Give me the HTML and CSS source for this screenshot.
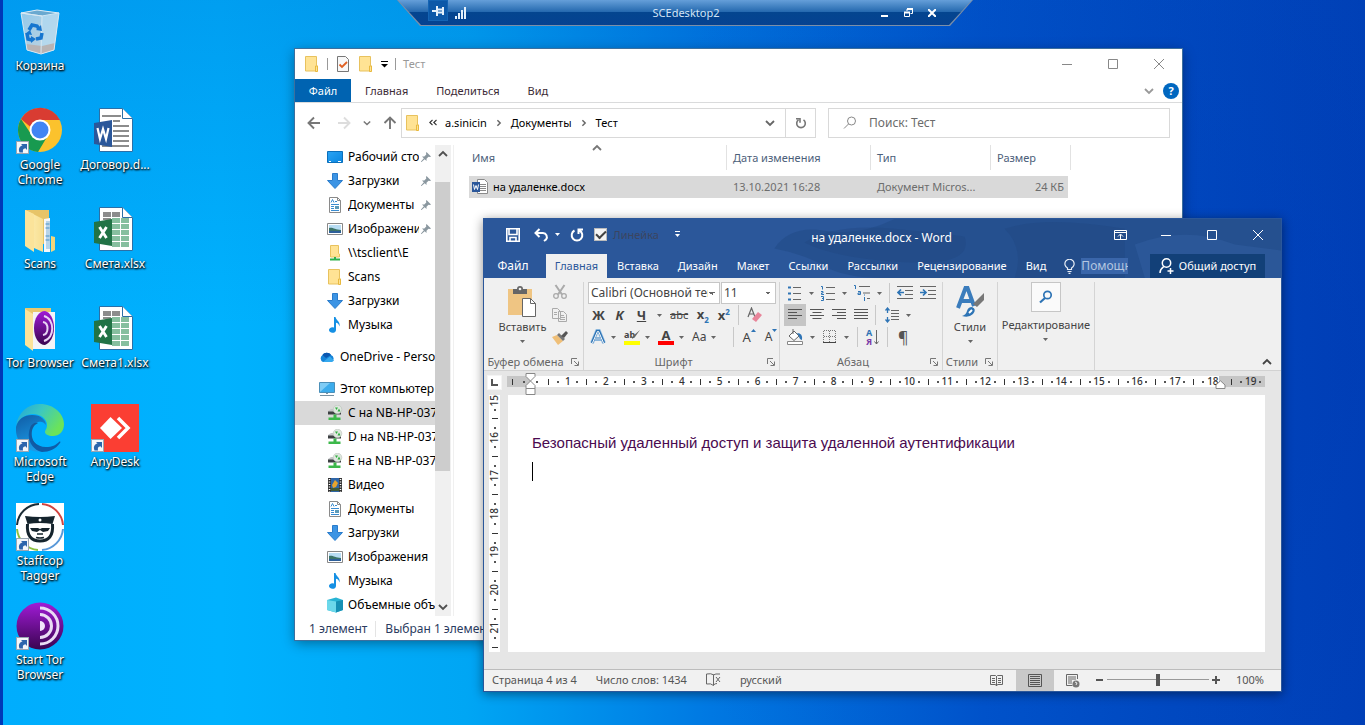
FILE: index.html
```html
<!DOCTYPE html>
<html lang="ru">
<head>
<meta charset="utf-8">
<title>SCEdesktop2</title>
<link rel="stylesheet" href="styles.css">
</head>
<body>
<svg class="defs" aria-hidden="true">
  <defs>
    <linearGradient id="gTor" x1="0" y1="0" x2="0" y2="1"><stop offset="0" stop-color="#a01bd6"/><stop offset="1" stop-color="#3a0450"/></linearGradient>
    <linearGradient id="gEdgeA" x1="0" y1="0" x2="1" y2="0.5"><stop offset="0" stop-color="#1fa4dc"/><stop offset="0.5" stop-color="#3cc8c0"/><stop offset="1" stop-color="#6be35a"/></linearGradient>
    <linearGradient id="gEdgeB" x1="0" y1="0" x2="0.4" y2="1"><stop offset="0" stop-color="#105ba4"/><stop offset="1" stop-color="#1b9be6"/></linearGradient>
    <linearGradient id="gFold" x1="0" y1="0" x2="1" y2="0"><stop offset="0" stop-color="#fff0b8"/><stop offset="1" stop-color="#f2d377"/></linearGradient>
    <linearGradient id="gBin" x1="0" y1="0" x2="1" y2="1"><stop offset="0" stop-color="#8fc9ec"/><stop offset="1" stop-color="#c8d4dc"/></linearGradient>
    <linearGradient id="gScr" x1="0" y1="0" x2="1" y2="1"><stop offset="0" stop-color="#2ba4f4"/><stop offset="1" stop-color="#0a86e0"/></linearGradient>

    <symbol id="shortcut" viewBox="0 0 13 13"><rect x=".5" y=".5" width="12" height="12" fill="#f4f7fa" stroke="#9aa6b2"/><path d="M3.500 11.500c-1.500-4 .2-6.500 3-7L5 3h6v6L9.500 7.200C7 7.500 6.500 9 7 11.500z" fill="#2c66ac"/></symbol>
    <symbol id="bin" viewBox="0 0 48 48"><path d="M5 5l16-3 22 3-5 37-13 4-14-4z" fill="url(#gBin)"/><path d="M5 5l16-3 22 3-17 3z" fill="#6aa9d0" stroke="#dcecf6"/><path d="M26 8l17-3-5 37-13 4z" fill="#b4dcf2" opacity=".65"/><path d="M10 36l16 2 13-3-1 7-13 4-14-4z" fill="#b9b4b4"/><path d="M5 5l21 3-1 37M5 5l6 37 14 4 13-4 5-37" fill="none" stroke="#d8e8f2"/><g fill="none" stroke="#1676cf" stroke-width="3.500"><path d="M13 22l3-5 5 1 2 3M11 25l1 6 4 1M20 31l5-1 1-5"/></g><path d="M20 22l6 1-1-6zM15 28l0 7 5-4zM9 26l5-4 2 5z" fill="#1676cf"/></symbol>
    <symbol id="chrome" viewBox="0 0 48 48"><circle cx="24" cy="23" r="22" fill="#fbc22d"/><path d="M5 12A22 22 0 0 1 44 13H24a10 10 0 0 0-9.500 7z" fill="#d93c32"/><path d="M5 12A22 22 0 0 0 22 45l9-15a10 10 0 0 1-16-3z" fill="#189a50"/><circle cx="24" cy="23" r="10.500" fill="#fff"/><circle cx="24" cy="23" r="8.500" fill="#4285f4"/></symbol>
    <symbol id="fileword" viewBox="0 0 48 48"><g transform="translate(-4 -1)"><path d="M12.500 2.500h23l10 10v33h-33z" fill="#fff" stroke="#2c6fa6"/><path d="M35.500 2.500v10h10" fill="#fff" stroke="#2c6fa6"/><path d="M15 10h19M26 15h7M26 20h16M26 25h16M26 30h16M26 35h16M15 40h27" stroke="#8c8c8c" stroke-width="2"/><path d="M7 17l18-3v27L7 38z" fill="#2b579a"/><path d="M10.500 22l2.500 11 3-10 3 10 2.500-11" fill="none" stroke="#fff" stroke-width="2.200"/></g></symbol>
    <symbol id="fileexcel" viewBox="0 0 48 48"><g transform="translate(-4 -1)"><path d="M12.500 2.500h23l10 10v33h-33z" fill="#fff" stroke="#2c6fa6"/><path d="M35.500 2.500v10h10" fill="#fff" stroke="#2c6fa6"/><path d="M16 7h8v5h-8zM25 7h8v5h-8zM16 13h8v2h-8zM25 13h8v2" fill="#8c8c8c"/><path d="M25 13h8v5h-8zM34 13h8v5h-8zM25 19h8v5h-8zM34 19h8v5h-8zM25 25h8v5h-8zM34 25h8v5h-8zM25 31h8v5h-8zM34 31h8v5h-8zM25 37h8v5h-8zM34 37h8v5h-8z" fill="#86bf9f"/><path d="M7 17l18-3v27L7 38z" fill="#217346"/><path d="M12.500 22l7 11M19.500 22l-7 11" fill="none" stroke="#fff" stroke-width="2.800"/></g></symbol>
    <symbol id="bigfolder" viewBox="0 0 48 48"><path d="M10 4h23v34H10z" fill="#e7c468"/><path d="M28 13l6-1v34h-6z" fill="#f4f8fb"/><path d="M30 15h4v28h-4z" fill="#b8d4e8"/><path d="M29.500 18h4M29.500 22h4M29.500 30h4M29.500 34h4" stroke="#4b93c8"/><path d="M9 4l18 9v33L9 38zM35 30l4 1v13l-4 2z" fill="url(#gFold)"/><path d="M9 4l9 4v38l-9-6z" fill="#fbe39a"/></symbol>
    <symbol id="torfolder" viewBox="0 0 48 48"><path d="M9 3h26v36H9z" fill="#e9c86e"/><path d="M17 7h22v37H17z" fill="#f3f3f7"/><path d="M29 6c-6 0-11 7-11 17s5 17 11 17c5-2 9-8 9-17S34 7 29 6z" fill="url(#gTor)"/><g fill="none" stroke="#e8d4f4" stroke-width="2"><path d="M27 17c6 1 6 12 0 13M28 11c11 3 11 22 0 25"/></g><path d="M9 4l8 5v37l-8-6z" fill="#fbe39a"/></symbol>
    <symbol id="tor" viewBox="0 0 48 48"><circle cx="24" cy="24" r="23.500" fill="url(#gTor)"/><path d="M24 19a5 5 0 0 1 0 10z" fill="#f2e6fa"/><g fill="none" stroke="#eadcf4" stroke-width="3"><path d="M24 12.500a11.500 11.500 0 0 1 0 23M24 6a18 18 0 0 1 0 36"/></g></symbol>
    <symbol id="edge" viewBox="0 0 48 48"><path d="M0 22C2 8 12 0 24 0c14 0 24 10 24 20 0 8-5 12-11 12-5 0-8-2-8-4s2-3 2-7c0-6-6-11-14-11C9 10 2 15 0 22z" fill="url(#gEdgeA)"/><path d="M0 23c2-8 8-12 16-12 9 0 14 5 14 10-2-3-5-4-8-3-5 2-8 8-6 15 1 6 5 11 11 14C12 50 0 39 0 26z" fill="url(#gEdgeB)"/><path d="M14 25c-1 10 6 18 16 18 6 0 10-2 13-5 1-1 2 0 1 1-4 6-11 9-18 9-10-2-16-14-12-23z" fill="#0f5ca8"/><path d="M19 21c-5 5-5 17 5 22-8-1-12-12-10-19 1-4 5-6 8-5z" fill="#155a9c"/></symbol>
    <symbol id="anydesk" viewBox="0 0 48 48"><path d="M0 0h48v48H0z" fill="#fb3e33"/><path d="M19.500 13L31 24 19.500 35 9 24z" fill="#fff"/><path d="M27 14l10 10-10 10" fill="none" stroke="#fff" stroke-width="3.500"/></symbol>
    <symbol id="staffcop" viewBox="0 0 48 48"><path d="M0 0h48v48H0z" fill="#fff"/><g fill="none" stroke-width="2"><path d="M1 22A23 23 0 0 1 23 1" stroke="#1c2c36"/><path d="M26 1a23 23 0 0 1 21 21" stroke="#d04440"/><path d="M47 26a23 23 0 0 1-21 21" stroke="#5898d8"/><path d="M22 47A23 23 0 0 1 1 26" stroke="#8cc040"/></g><path d="M11.500 21c-1 12 4 17 12.500 17s13.500-5 12.500-17" fill="#fff" stroke="#15242d" stroke-width="3"/><path d="M9 13q15 2 30 0l-2.500 8q-12.500-2-25 0z" fill="#15242d"/><path d="M14 25h8l2 1 2-1h8l-2 3-5 1-3-2-3 2-5-1z" fill="#15242d"/><path d="M21 31h6M20 34.500q4 1 8 0" fill="none" stroke="#15242d" stroke-width="1.300"/><circle cx="24" cy="17" r="1.500" fill="#fff"/></symbol>

    <symbol id="folder" viewBox="0 0 16 16"><path d="M1.500.500h11v9l1 .5v5h-12z" fill="#ffe394" stroke="#e8c25e"/><path d="M11.500 15.500V10h2v5.500z" fill="#ffe394" stroke="#e8b93e"/></symbol>
    <symbol id="check" viewBox="0 0 16 16"><path d="M2.500.500h8l3 3v12h-11z" fill="#f8f8f8" stroke="#777"/><path d="M4.500 8.500l2.500 2.500 5-5" fill="none" stroke="#e06022" stroke-width="1.800"/></symbol>
    <symbol id="desk" viewBox="0 0 16 16"><path d="M.5 2.500h15v11H.5z" fill="url(#gScr)" stroke="#0b6fbb"/><path d="M2 12.500h2M11 12.500h3" stroke="#fff"/></symbol>
    <symbol id="down" viewBox="0 0 16 16"><path d="M5.500.500h5v7h5L8 15.500.500 7.500h5z" fill="#3c94e4" stroke="#2a7ccc"/></symbol>
    <symbol id="doc" viewBox="0 0 16 16"><path d="M2.500.500h8l3 3v12h-11z" fill="#fff" stroke="#8a8a8a"/><path d="M10.500.500v3h3" fill="none" stroke="#8a8a8a"/><path d="M4 5.500l1.500-3L7 5.500M8 4.500h2M4 7.500h8M4 9.500h3M4 11.500h3M4 13.500h8" stroke="#3a8cd0" fill="none"/><path d="M8 9h4v3H8z" fill="#5b9ab8"/></symbol>
    <symbol id="pic" viewBox="0 0 16 16"><path d="M.5 2.500h15v11H.5z" fill="#fff" stroke="#888"/><path d="M2 4h12v8H2z" fill="#b8ddf4"/><path d="M2 7c4-1 6 2 12 2v3H2z" fill="#3c7468"/><path d="M2 10h12v2H2z" fill="#2d5f9a"/></symbol>
    <symbol id="netfolder" viewBox="0 0 16 16"><path d="M3.500.500h8v8l1 .5v3h-9z" fill="#ffe394" stroke="#e8c25e"/><path d="M8 12v3M3 14.500h10" stroke="#2bb04a" stroke-width="2"/></symbol>
    <symbol id="music" viewBox="0 0 16 16"><path d="M7 0h1.500c.5 3.500 5 4 4 9.500-.5-2.500-2-3.500-3.500-3.800V13a3.500 2.800 0 1 1-2-2.500z" fill="#1590e4"/></symbol>
    <symbol id="cloud" viewBox="0 0 16 16"><path d="M4 13a4 4 0 0 1-.5-7A5 5 0 0 1 12 6a3.800 3.800 0 0 1 .5 7z" fill="#1684d8"/><path d="M3.500 6A5 5 0 0 1 12 6L7 9z" fill="#0a57b0"/><path d="M4 13l7-5.500 4 4a3.500 3.500 0 0 1-2.500 1.500z" fill="#36a9ee"/></symbol>
    <symbol id="pc" viewBox="0 0 16 16"><path d="M.5 1.500h15v10H.5z" fill="#7fccf5" stroke="#4b8fb8"/><path d="M1 11L11 2h4v9z" fill="#3cacec"/><path d="M7 12h2v1H7zM1 14h14v1H1z" fill="#7890a0"/></symbol>
    <symbol id="netdrive" viewBox="0 0 16 16"><path d="M1 6l3-2h10v3H1z" fill="#c4c6c8"/><path d="M1 6.500h13v3H1z" fill="#3c4042"/><circle cx="10.500" cy="4.500" r="4.300" fill="#dfe8df" stroke="#b8c0b8" stroke-width=".6"/><path d="M8 2.500h3L9.500 5zM13.500 6.500h-3L12 3.500z" fill="#2fae3e"/><path d="M6.500 9.500h3v3h-3zM1.500 12.500h12v2.500h-12z" fill="#3cb84a"/></symbol>
    <symbol id="film" viewBox="0 0 16 16"><path d="M1 1h14v14H1z" fill="#333"/><path d="M4 1h8v14H4z" fill="#2f66a8"/><path d="M5 8l3-5 3 3-2 4-3 1z" fill="#e8a52c"/><path d="M4 11h8v3H4z" fill="#3f5c38"/><path d="M2.500 2v13M13.500 2v13" stroke="#fff" stroke-width="1.500" stroke-dasharray="1 1.500"/></symbol>
    <symbol id="cube" viewBox="0 0 16 16"><path d="M0 3l9-2.500L16 3v10l-7 2.500L0 13z" fill="#28b4d4"/><path d="M0 3l9 1.500V15.500L0 13z" fill="#6cd8ea"/><path d="M9 4.500L16 3v10l-7 2.500z" fill="#1690b4"/></symbol>
    <symbol id="miniword" viewBox="0 0 16 16"><path d="M5.500.500h7l3 3v11h-10z" fill="#fff" stroke="#8a8a8a"/><path d="M8 5.500h6M8 7.500h6M8 9.500h6M8 11.500h6" stroke="#8a8a8a"/><path d="M0 3h8v10H0z" fill="#2b579a"/><path d="M1.500 5.500l1 5 1.500-4 1.500 4 1-5" fill="none" stroke="#fff"/></symbol>
    <symbol id="pin" viewBox="0 0 10 10"><path d="M5.500 0L10 4.500 9 5 7.500 4.700 5.500 6.700 5.500 9 1 4.500 3.300 4.500 5.300 2.500 5 1zM3 6l1 1-3.500 3H0v-.5z" fill="#8a979f"/></symbol>

    <symbol id="chev" viewBox="0 0 10 10"><path d="M1 3l4 4 4-4" fill="none" stroke="currentColor" stroke-width="1.800"/></symbol>
    <symbol id="chevup" viewBox="0 0 10 10"><path d="M1 7l4-4 4 4" fill="none" stroke="currentColor" stroke-width="1.800"/></symbol>
    <symbol id="chevr" viewBox="0 0 10 10"><path d="M3 1.500L6.500 5 3 8.500" fill="none" stroke="currentColor" stroke-width="1.800"/></symbol>
    <symbol id="dchev" viewBox="0 0 8 8"><path d="M3.500 1L.8 3.500 3.500 6M7.500 1L4.800 3.500 7.500 6" fill="none" stroke="#333" stroke-width="1.100"/></symbol>
    <symbol id="tri" viewBox="0 0 5 3"><path d="M0 0h5L2.500 3z" fill="currentColor"/></symbol>
    <symbol id="arrow" viewBox="0 0 14 14"><path d="M13 7H2M7 1.500L1.500 7 7 12.500" fill="none" stroke="currentColor" stroke-width="1.900"/></symbol>
    <symbol id="min" viewBox="0 0 10 10"><path d="M0 5.500h10" stroke="currentColor"/></symbol>
    <symbol id="max" viewBox="0 0 10 10"><path d="M.5.500h9v9h-9z" fill="none" stroke="currentColor"/></symbol>
    <symbol id="close" viewBox="0 0 10 10"><path d="M0 0l10 10M10 0L0 10" stroke="currentColor"/></symbol>
    <symbol id="launch" viewBox="0 0 8 8"><path d="M.5 6V.500H6M3 3l4 4M7.500 3.500v4h-4" fill="none" stroke="#777"/></symbol>
  </defs>
</svg>

<main class="desktop">
  <nav class="shortcuts" aria-label="Рабочий стол">
    <a class="icon" href="#"><svg class="art"><use href="#bin"/></svg><span>Корзина</span></a>
    <a class="icon first" href="#"><svg class="art"><use href="#chrome"/><use href="#shortcut" y="34" width="13" height="13"/></svg><span>Google Chrome</span></a>
    <a class="icon" href="#"><svg class="art"><use href="#fileword"/></svg><span>Договор.d...</span></a>
    <a class="icon" href="#"><svg class="art"><use href="#bigfolder"/></svg><span>Scans</span></a>
    <a class="icon" href="#"><svg class="art"><use href="#fileexcel"/></svg><span>Смета.xlsx</span></a>
    <a class="icon" href="#"><svg class="art"><use href="#torfolder"/></svg><span>Tor Browser</span></a>
    <a class="icon" href="#"><svg class="art"><use href="#fileexcel"/></svg><span>Смета1.xlsx</span></a>
    <a class="icon" href="#"><svg class="art"><use href="#edge"/><use href="#shortcut" y="35" width="13" height="13"/></svg><span>Microsoft Edge</span></a>
    <a class="icon" href="#"><svg class="art"><use href="#anydesk"/><use href="#shortcut" y="35" width="13" height="13"/></svg><span>AnyDesk</span></a>
    <a class="icon" href="#"><svg class="art"><use href="#staffcop"/><use href="#shortcut" y="35" width="13" height="13"/></svg><span>Staffcop Tagger</span></a>
    <a class="icon first" href="#"><svg class="art"><use href="#tor"/><use href="#shortcut" y="35" width="13" height="13"/></svg><span>Start Tor Browser</span></a>
  </nav>

  <section class="explorer" aria-label="Тест">
    <header class="ex-title">
      <svg class="i16"><use href="#folder"/></svg><i class="bar"></i>
      <button class="plain" aria-label="Свойства"><svg class="i16"><use href="#check"/></svg></button>
      <button class="plain" aria-label="Новая папка"><svg class="i16"><use href="#folder"/></svg></button>
      <button class="plain custom" aria-label="Настройка"><svg width="7" height="7" viewBox="0 0 7 7"><path d="M0 .5h7" stroke="#000"/><path d="M0 3h7L3.500 6.500z"/></svg></button><i class="bar"></i>
      <h1>Тест</h1>
      <div class="wbtns"><button aria-label="Свернуть"><svg class="i10"><use href="#min"/></svg></button><button aria-label="Развернуть"><svg class="i10"><use href="#max"/></svg></button><button aria-label="Закрыть"><svg class="i10"><use href="#close"/></svg></button></div>
    </header>
    <div class="ex-tabs">
      <button class="file">Файл</button><button>Главная</button><button>Поделиться</button><button>Вид</button>
      <span class="grow"></span>
      <button class="plain fold" aria-label="Развернуть ленту"><svg class="i10"><use href="#chev"/></svg></button>
      <button class="help" aria-label="Справка">?</button>
    </div>
    <div class="ex-nav">
      <div class="arrows">
        <button class="plain" aria-label="Назад"><svg class="i14"><use href="#arrow"/></svg></button>
        <button class="plain dim" aria-label="Вперед"><svg class="i14 flip"><use href="#arrow"/></svg></button>
        <button class="plain" aria-label="Последние"><svg class="i8"><use href="#chev"/></svg></button>
        <button class="plain" aria-label="Вверх"><svg class="i14 turn"><use href="#arrow"/></svg></button>
      </div>
      <div class="address">
        <svg class="i16"><use href="#folder"/></svg>
        <svg class="i8"><use href="#dchev"/></svg>
        <a href="#">a.sinicin</a><svg class="i8"><use href="#chevr"/></svg>
        <a href="#">Документы</a><svg class="i8"><use href="#chevr"/></svg>
        <a href="#">Тест</a>
        <span class="grow"></span>
        <button class="plain" aria-label="Список"><svg class="i10"><use href="#chev"/></svg></button>
        <button class="plain refresh" aria-label="Обновить"><svg width="12" height="12" viewBox="0 0 12 12"><path d="M8.500 2.800A4.300 4.300 0 1 1 3.500 2.800M1 1.800h4v4" fill="none" stroke="#777" stroke-width="1.600"/></svg></button>
      </div>
      <label class="search"><svg width="14" height="14" viewBox="0 0 14 14"><circle cx="8.500" cy="5" r="4" fill="none" stroke="#888"/><path d="M5.500 8L1 12.500" stroke="#888"/></svg><input type="text" placeholder="Поиск: Тест" aria-label="Поиск: Тест"></label>
    </div>
    <div class="ex-body">
      <nav class="tree" aria-label="Папки">
        <a class="pinned" href="#"><svg class="i16"><use href="#desk"/></svg><span>Рабочий стол</span><svg class="i10"><use href="#pin"/></svg></a>
        <a class="pinned" href="#"><svg class="i16"><use href="#down"/></svg><span>Загрузки</span><svg class="i10"><use href="#pin"/></svg></a>
        <a class="pinned" href="#"><svg class="i16"><use href="#doc"/></svg><span>Документы</span><svg class="i10"><use href="#pin"/></svg></a>
        <a class="pinned" href="#"><svg class="i16"><use href="#pic"/></svg><span>Изображения</span><svg class="i10"><use href="#pin"/></svg></a>
        <a href="#"><svg class="i16"><use href="#netfolder"/></svg><span>\\tsclient\E</span></a>
        <a href="#"><svg class="i16"><use href="#folder"/></svg><span>Scans</span></a>
        <a href="#"><svg class="i16"><use href="#down"/></svg><span>Загрузки</span></a>
        <a href="#"><svg class="i16"><use href="#music"/></svg><span>Музыка</span></a>
        <a class="root" href="#"><svg class="i16"><use href="#cloud"/></svg><span>OneDrive - Personal</span></a>
        <a class="root" href="#"><svg class="i16"><use href="#pc"/></svg><span>Этот компьютер</span></a>
        <a class="current" href="#"><svg class="i16"><use href="#netdrive"/></svg><span>C на NB-HP-0373</span></a>
        <a href="#"><svg class="i16"><use href="#netdrive"/></svg><span>D на NB-HP-0373</span></a>
        <a href="#"><svg class="i16"><use href="#netdrive"/></svg><span>E на NB-HP-0373</span></a>
        <a href="#"><svg class="i16"><use href="#film"/></svg><span>Видео</span></a>
        <a href="#"><svg class="i16"><use href="#doc"/></svg><span>Документы</span></a>
        <a href="#"><svg class="i16"><use href="#down"/></svg><span>Загрузки</span></a>
        <a href="#"><svg class="i16"><use href="#pic"/></svg><span>Изображения</span></a>
        <a href="#"><svg class="i16"><use href="#music"/></svg><span>Музыка</span></a>
        <a href="#"><svg class="i16"><use href="#cube"/></svg><span>Объемные объекты</span></a>
      </nav>
      <div class="scroll"><svg class="i10"><use href="#chevup"/></svg><i></i><svg class="i10"><use href="#chev"/></svg></div>
      <div class="files">
        <svg class="i10 sort"><use href="#chevup"/></svg>
        <table>
          <colgroup><col class="c1"><col class="c2"><col class="c3"><col class="c4"></colgroup>
          <thead><tr><th>Имя</th><th>Дата изменения</th><th>Тип</th><th>Размер</th></tr></thead>
          <tbody><tr><td><div class="fname"><svg class="i16"><use href="#miniword"/></svg>на удаленке.docx</div></td><td>13.10.2021 16:28</td><td>Документ Micros...</td><td>24 КБ</td></tr></tbody>
        </table>
      </div>
    </div>
    <footer class="ex-status"><span>1 элемент</span><span>Выбран 1 элемент</span></footer>
  </section>

  <section class="word" aria-label="Word">
    <div class="w-head">
      <svg class="clouds" viewBox="0 0 796 60" preserveAspectRatio="none"><path d="M290 30q16-24 50-18t70-12h386v60H400q-40 0-60-12t-50-18z" fill="#244d8a" opacity=".7"/><path d="M320 24q30-20 90-14t70 8q10 30-60 26t-100-20zM520 10q40-14 120 0v50h-110q10-30-10-50z" fill="#1f457e" opacity=".35"/><path d="M650 26q50-20 100 0l46 6v28H660z" fill="#3562a5" opacity=".4"/></svg>
      <header class="w-title">
        <div class="qat">
          <button class="plain" aria-label="Сохранить"><svg width="14" height="14" viewBox="0 0 14 14"><path d="M.8.800h12.400v12.400H.8zM3 1v5.500h8V1M4 13V9.500h6V13" fill="none" stroke="#fff" stroke-width="1.600"/></svg></button>
          <button class="plain undo" aria-label="Отменить"><svg width="15" height="14" viewBox="0 0 15 14"><path d="M5.500 1L1.500 5l4 4M2 5h7a4 4 0 0 1 3 6.500L10 13" fill="none" stroke="#fff" stroke-width="2"/></svg><svg class="tri"><use href="#tri"/></svg></button>
          <button class="plain" aria-label="Повторить"><svg width="14" height="14" viewBox="0 0 14 14"><path d="M4.500 2.500A5.300 5.300 0 1 0 9.500 2.500M8.500 6V1.500H13" fill="none" stroke="#fff" stroke-width="2"/></svg></button>
          <label class="ruler-opt"><input type="checkbox" checked><span>Линейка</span></label>
          <button class="plain" aria-label="Настройка"><svg width="5" height="7" viewBox="0 0 5 7"><path d="M0 .5h5" stroke="#fff"/><path d="M0 3h5L2.500 6z" fill="#fff"/></svg></button>
        </div>
        <h2>на удаленке.docx - Word</h2>
        <div class="wbtns"><button aria-label="Параметры ленты"><svg width="13" height="10" viewBox="0 0 13 10"><path d="M.5.500h12v9H.5zM1 2.500h11M6.500 9V4.500M4 6.500L6.500 4 9 6.500" fill="none" stroke="#fff"/></svg></button><button aria-label="Свернуть"><svg class="i10"><use href="#min"/></svg></button><button aria-label="Развернуть"><svg class="i10"><use href="#max"/></svg></button><button aria-label="Закрыть"><svg class="i10"><use href="#close"/></svg></button></div>
      </header>
      <div class="w-tabs">
        <button class="wfile">Файл</button><button class="on">Главная</button><button>Вставка</button><button>Дизайн</button><button>Макет</button><button>Ссылки</button><button>Рассылки</button><button>Рецензирование</button><button>Вид</button>
        <label class="tell"><svg width="11" height="15" viewBox="0 0 11 15"><path d="M3.500 10.500V9a4.600 4.600 0 1 1 4 0v1.500zM3.500 12.500h4M4.500 14.300h2" fill="none" stroke="#e8eef6" stroke-width="1.200"/></svg><input type="text" placeholder="Помощник" aria-label="Помощник"></label>
        <span class="grow"></span>
        <button class="share"><svg width="15" height="16" viewBox="0 0 15 16"><circle cx="7.500" cy="5" r="4.200" fill="none" stroke="#fff" stroke-width="1.500"/><path d="M1 15c0-4 2-5 4-6.500M8.500 13h6M11.500 10v6" fill="none" stroke="#fff" stroke-width="1.500"/></svg>Общий доступ</button>
      </div>
    </div>

    <div class="ribbon">
      <div class="group g-clip">
        <div class="g-main">
          <button class="big"><svg width="30" height="32" viewBox="0 0 30 32"><path d="M1 3h24v26H1z" fill="#efc583"/><path d="M6 3h4q0-3 3-3t3 3h4v5H6z" fill="#666"/><circle cx="13" cy="3" r="1.300" fill="#f0f0f0"/><path d="M15.500 12.500h8l5 5v13h-13z" fill="#fff" stroke="#666"/><path d="M23.500 12.500v5h5" fill="none" stroke="#666"/></svg>Вставить<svg class="tri"><use href="#tri"/></svg></button>
          <div class="stack">
            <button class="plain" aria-label="Вырезать"><svg width="14" height="16" viewBox="0 0 14 16"><path d="M2.500 1L9 10.500M11.500 1L5 10.500" stroke="#aaa" stroke-width="2"/><circle cx="3" cy="12" r="2.300" fill="none" stroke="#aaa" stroke-width="1.300"/><circle cx="11" cy="12" r="2.300" fill="none" stroke="#aaa" stroke-width="1.300"/></svg></button>
            <button class="plain" aria-label="Копировать"><svg width="16" height="14" viewBox="0 0 16 14"><path d="M.5.500h5l3 3v7h-8zM6.500 3.500h5l3 3v7h-8z" fill="#f0f0f0" stroke="#aaa"/><path d="M2 4.500h3M2 6.500h3M8 7.500h4M8 9.500h5M8 11.500h5" stroke="#aaa"/></svg></button>
            <button class="plain" aria-label="Формат по образцу"><svg width="16" height="14" viewBox="0 0 16 14"><path d="M0 6l5-2 6 6-5 4z" fill="#efbf78"/><path d="M5 4l2-2 6 6-2 2z" fill="#777"/><path d="M9 5l5-5 2 2-4 5z" fill="#555"/></svg></button>
          </div>
        </div>
        <div class="g-label"><span>Буфер обмена</span><button class="plain" aria-label="Буфер обмена: параметры"><svg class="i8"><use href="#launch"/></svg></button></div>
      </div>
      <div class="group g-font">
        <div class="rows">
          <div class="row combos"><select class="fontname" aria-label="Шрифт"><option>Calibri (Основной текст)</option></select><select class="fontsize" aria-label="Размер шрифта"><option>11</option></select></div>
          <div class="row r-fmt">
            <button class="t"><b>Ж</b></button><button class="t"><b><i>К</i></b></button><button class="t wide"><b><u>Ч</u></b></button><button class="plain" aria-label="Подчеркивание"><svg class="tri"><use href="#tri"/></svg></button><button class="t small"><s>abc</s></button><button class="t"><b>x<sub>2</sub></b></button><button class="t"><b>x<sup>2</sup></b></button><i class="bar"></i>
            <button class="plain" aria-label="Очистить формат"><svg width="16" height="16" viewBox="0 0 16 16"><path d="M1 10L4.500 1 8 10M2.500 7h4" fill="none" stroke="#666" stroke-width="1.200"/><path d="M5 12l6-7 4 3-6 7z" fill="#e8859a"/></svg></button>
          </div>
          <div class="row r-col">
            <button class="plain mark" aria-label="Эффекты"><svg width="16" height="16" viewBox="0 0 16 16"><path d="M2 14L7 2h2l5 12M4.500 10h7" fill="none" stroke="#a9cbe8" stroke-width="4"/><path d="M2 14L7 2h2l5 12M4.500 10h7" fill="none" stroke="#2e74b5" stroke-width="2.600"/><path d="M2.500 14L7.400 2.500h1.200L13.500 14M5 10h6" fill="none" stroke="#fff" stroke-width="1"/></svg><svg class="tri"><use href="#tri"/></svg></button>
            <button class="mark" aria-label="Цвет выделения"><span class="hl"><em>ab</em><svg width="8" height="10" viewBox="0 0 8 10"><path d="M8 0L3 7 0 9 1 6z" fill="#666"/></svg></span><svg class="tri"><use href="#tri"/></svg></button>
            <button class="mark"><span class="fc"><b>А</b></span><svg class="tri"><use href="#tri"/></svg></button>
            <button class="mark"><span>Aa</span><svg class="tri"><use href="#tri"/></svg></button><i class="bar"></i>
            <button class="grow-a">A<svg class="tri"><path d="M0 3h5L2.500 0z" fill="#2e74b5"/></svg></button>
            <button class="grow-a less">A<svg class="tri"><path d="M0 0h5L2.500 3z" fill="#2e74b5"/></svg></button>
          </div>
        </div>
        <div class="g-label"><span>Шрифт</span><button class="plain" aria-label="Шрифт: параметры"><svg class="i8"><use href="#launch"/></svg></button></div>
      </div>
      <div class="group g-para">
        <div class="rows">
          <div class="row r-list">
            <button class="plain pair" aria-label="Маркеры"><svg width="14" height="16" viewBox="0 0 14 16"><path d="M5 2.500h8M5 8.500h8M5 14.500h8" stroke="#666"/><path d="M0 1.500h3v2H0zM0 7.500h3v2H0zM0 13.500h3v2H0z" fill="#2e74b5"/></svg><svg class="tri"><use href="#tri"/></svg></button>
            <button class="plain pair" aria-label="Нумерация"><svg width="14" height="16" viewBox="0 0 14 16"><path d="M5 2.500h9M5 8.500h9M5 14.500h9" stroke="#666"/><path d="M0 1.500h1.500V4.500M0 6.500h2v1.500H.5v1.500H3M0 11.500h2.500v4H0M1 13.500h1" fill="none" stroke="#2e74b5"/></svg><svg class="tri"><use href="#tri"/></svg></button>
            <button class="plain pair" aria-label="Многоуровневый список"><svg width="16" height="16" viewBox="0 0 16 16"><path d="M5 1.500h11M9 8h7M13 13.500h3" stroke="#666"/><path d="M0 .5h1.500V4M4 6.500h2.500v3H4v-1.500h2M10.500 9.500v1M10.500 12v4" fill="none" stroke="#2e74b5"/></svg><svg class="tri"><use href="#tri"/></svg></button>
            <i class="bar"></i>
            <button class="plain" aria-label="Уменьшить отступ"><svg width="16" height="14" viewBox="0 0 16 14"><path d="M0 .5h16M8 4.500h8M8 8.500h8M0 12.500h16" stroke="#666"/><path d="M7 6.500H1M4 3.500l-3 3 3 3" fill="none" stroke="#2e74b5" stroke-width="1.700"/></svg></button>
            <button class="plain" aria-label="Увеличить отступ"><svg width="16" height="14" viewBox="0 0 16 14"><path d="M0 .5h16M8 4.500h8M8 8.500h8M0 12.500h16" stroke="#666"/><path d="M0 6.500h6M3 3.500l3 3-3 3" fill="none" stroke="#2e74b5" stroke-width="1.700"/></svg></button>
          </div>
          <div class="row r-align">
            <button class="sq sel" aria-label="По левому краю"><svg width="14" height="12" viewBox="0 0 14 12"><path d="M0 .5h14M0 3.500h9M0 6.500h14M0 9.500h9" stroke="#555"/></svg></button><button class="sq" aria-label="По центру"><svg width="14" height="12" viewBox="0 0 14 12"><path d="M0 .5h14M2.500 3.500h9M0 6.500h14M2.500 9.500h9" stroke="#555"/></svg></button><button class="sq" aria-label="По правому краю"><svg width="14" height="12" viewBox="0 0 14 12"><path d="M0 .5h14M5 3.500h9M0 6.500h14M5 9.500h9" stroke="#555"/></svg></button><button class="sq" aria-label="По ширине"><svg width="14" height="12" viewBox="0 0 14 12"><path d="M0 .5h14M0 3.500h14M0 6.500h14M0 9.500h14" stroke="#555"/></svg></button>
            <i class="bar"></i>
            <button class="plain pair" aria-label="Интервал"><svg width="14" height="16" viewBox="0 0 14 16"><path d="M6 3.500h8M6 6.500h8M6 9.500h8M6 12.500h8" stroke="#666"/><path d="M2.500 1v5M.5 3.500l2-2.500 2 2.500M2.500 10v5M.5 12.500l2 2.500 2-2.500" fill="none" stroke="#2e74b5" stroke-width="1.300"/></svg><svg class="tri"><use href="#tri"/></svg></button>
          </div>
          <div class="row r-fill">
            <button class="plain pair" aria-label="Заливка"><svg width="16" height="16" viewBox="0 0 16 16"><path d="M2 7l5-5 5 5-5 4.500zM6 0v5" fill="#fff" stroke="#666"/><path d="M10 4q6 0 5 7-3-1-3-4z" fill="#2e74b5"/><path d="M.5 12.500h15v3H.5z" fill="#fff" stroke="#888"/></svg><svg class="tri"><use href="#tri"/></svg></button>
            <button class="plain pair" aria-label="Границы"><svg width="14" height="14" viewBox="0 0 14 14"><path d="M.5 1v12M6.500 1v12M12.500 1v12M1 .5h12M1 6.500h12" fill="none" stroke="#777" stroke-dasharray="1 1"/><path d="M0 12.500h13" stroke="#444"/></svg><svg class="tri"><use href="#tri"/></svg></button>
            <i class="bar"></i>
            <button class="sortb" aria-label="Сортировка"><span><b class="sa">А</b><b class="sz">Я</b></span><svg width="5" height="15" viewBox="0 0 5 15"><path d="M2.500 0v14M.5 11.500l2 2.500 2-2.500" fill="none" stroke="#666"/></svg></button>
            <i class="bar"></i>
            <button class="pilcrow">¶</button>
          </div>
        </div>
        <div class="g-label"><span>Абзац</span><button class="plain" aria-label="Абзац: параметры"><svg class="i8"><use href="#launch"/></svg></button></div>
      </div>
      <div class="group g-style">
        <div class="g-main"><button class="big"><svg width="28" height="32" viewBox="0 0 28 32"><path d="M2 22L9.500 2h2L18 20M5 15h12" fill="none" stroke="#3a7cbc" stroke-width="4"/><path d="M28 7v7l-7 7-4-3z" fill="#777"/><path d="M6 30q4-1 5-5t5-4q5 2 1 7-4 4-11 2z" fill="#2e74b5"/><path d="M13 27l3-3" stroke="#fff" stroke-width="2"/></svg>Стили<svg class="tri"><use href="#tri"/></svg></button></div>
        <div class="g-label"><span>Стили</span><button class="plain" aria-label="Стили: параметры"><svg class="i8"><use href="#launch"/></svg></button></div>
      </div>
      <div class="group g-edit">
        <div class="g-main"><button class="big"><span class="box"><svg width="14" height="14" viewBox="0 0 14 14"><circle cx="8.500" cy="5" r="3.700" fill="none" stroke="#2e74b5" stroke-width="1.700"/><path d="M6 8l-5 4.500" stroke="#2e74b5" stroke-width="2.200"/></svg></span>Редактирование<svg class="tri"><use href="#tri"/></svg></button></div>
      </div>
      <span class="grow"></span>
      <button class="plain collapse" aria-label="Свернуть ленту"><svg class="i10"><use href="#chevup"/></svg></button>
    </div>

    <div class="work">
      <div class="corner"><button class="tabstop" aria-label="Табуляция"><svg width="7" height="7" viewBox="0 0 7 7"><path d="M1 0v6h6" fill="none" stroke="#555" stroke-width="2"/></svg></button></div>
      <div class="hruler">
        <div class="margin l"><i class="tick"></i><i class="dot"></i></div>
        <div class="cells">
          <div class="half"><i class="dot"></i></div>
          <div class="cell"><i class="tick"></i><i class="dot"></i><b>1</b><i class="dot"></i></div><div class="cell"><i class="tick"></i><i class="dot"></i><b>2</b><i class="dot"></i></div><div class="cell"><i class="tick"></i><i class="dot"></i><b>3</b><i class="dot"></i></div><div class="cell"><i class="tick"></i><i class="dot"></i><b>4</b><i class="dot"></i></div><div class="cell"><i class="tick"></i><i class="dot"></i><b>5</b><i class="dot"></i></div><div class="cell"><i class="tick"></i><i class="dot"></i><b>6</b><i class="dot"></i></div><div class="cell"><i class="tick"></i><i class="dot"></i><b>7</b><i class="dot"></i></div><div class="cell"><i class="tick"></i><i class="dot"></i><b>8</b><i class="dot"></i></div><div class="cell"><i class="tick"></i><i class="dot"></i><b>9</b><i class="dot"></i></div><div class="cell"><i class="tick"></i><i class="dot"></i><b>10</b><i class="dot"></i></div><div class="cell"><i class="tick"></i><i class="dot"></i><b>11</b><i class="dot"></i></div><div class="cell"><i class="tick"></i><i class="dot"></i><b>12</b><i class="dot"></i></div><div class="cell"><i class="tick"></i><i class="dot"></i><b>13</b><i class="dot"></i></div><div class="cell"><i class="tick"></i><i class="dot"></i><b>14</b><i class="dot"></i></div><div class="cell"><i class="tick"></i><i class="dot"></i><b>15</b><i class="dot"></i></div><div class="cell"><i class="tick"></i><i class="dot"></i><b>16</b><i class="dot"></i></div><div class="cell"><i class="tick"></i><i class="dot"></i><b>17</b><i class="dot"></i></div><div class="cell"><i class="tick"></i><i class="dot"></i><b>18</b><i></i></div><div class="cell"><i class="tick"></i><i class="dot"></i><b>19</b><i class="dot"></i></div>
        </div>
        <svg class="indent" width="11" height="22" viewBox="0 0 11 22"><path d="M1 .5h9v3L5.500 8 1 3.500zM1 15.500v-3L5.500 8 10 12.500v3zM1 15.500h9v6H1z" fill="#fff" stroke="#888"/></svg>
        <svg class="rindent" width="11" height="9" viewBox="0 0 11 9"><path d="M1 8.500V5L5.500.800 10 5v3.500z" fill="#fff" stroke="#888"/></svg>
      </div>
      <div class="vruler">
        <div class="vcell"><b>15</b><i class="dot"></i></div>
        <div class="vcell"><i class="tick"></i><i class="dot"></i><b>16</b><i class="dot"></i></div><div class="vcell"><i class="tick"></i><i class="dot"></i><b>17</b><i class="dot"></i></div><div class="vcell"><i class="tick"></i><i class="dot"></i><b>18</b><i class="dot"></i></div><div class="vcell"><i class="tick"></i><i class="dot"></i><b>19</b><i class="dot"></i></div><div class="vcell"><i class="tick"></i><i class="dot"></i><b>20</b><i class="dot"></i></div><div class="vcell"><i class="tick"></i><i class="dot"></i><b>21</b><i class="dot"></i></div>
        <div class="vend"><i class="tick"></i></div>
      </div>
      <article class="page"><p>Безопасный удаленный доступ и защита удаленной аутентификации</p><i class="caret"></i></article>
    </div>

    <footer class="w-status">
      <span>Страница 4 из 4</span><span>Число слов: 1434</span>
      <button class="plain" aria-label="Правописание"><svg width="15" height="13" viewBox="0 0 15 13"><path d="M8 2Q5 0 .5 1v10Q5 10 7.500 12.500V2Q9 .5 14 1M7.500 12Q9 10.500 11 10.500M10 4l4 5M14 4l-4 5" fill="none" stroke="#666"/></svg></button>
      <span>русский</span>
      <span class="grow"></span>
      <button class="view" aria-label="Режим чтения"><svg width="13" height="13" viewBox="0 0 13 13"><path d="M.5 1.500h5l1 1 1-1h5v9h-5l-1 1.500-1-1.500h-5zM6.500 2v10M2 4.500h3M2 6.500h3M2 8.500h3M8 4.500h3M8 6.500h3M8 8.500h3" fill="none" stroke="#666"/></svg></button>
      <button class="view sel" aria-label="Разметка страницы"><svg width="14" height="13" viewBox="0 0 14 13"><path d="M.5.500h13v12H.5zM2 2.500h10M2 4.500h10M2 6.500h10M2 8.500h10M2 10.500h10" fill="none" stroke="#555"/></svg></button>
      <button class="view" aria-label="Веб-документ"><svg width="14" height="14" viewBox="0 0 14 14"><path d="M11.500 5V.500H.5v11h6M2 3h8M2 5h8M2 7h4M2 9h4" fill="none" stroke="#666"/><circle cx="10" cy="10" r="3.500" fill="#777"/><path d="M9 8l2 1-1 2" stroke="#eee" fill="none"/></svg></button>
      <div class="zoom"><button class="plain" aria-label="Уменьшить"><svg width="8" height="8"><path d="M0 4h7" stroke="#555" stroke-width="2"/></svg></button><input type="range" min="0" max="100" value="50" aria-label="Масштаб"><button class="plain" aria-label="Увеличить"><svg width="8" height="8"><path d="M0 4h8M4 0v8" stroke="#555" stroke-width="2"/></svg></button></div>
      <span class="pct">100%</span>
    </footer>
  </section>

  <header class="rdp"><div class="rdp-in">
    <button class="pinbtn" aria-label="Закрепить"><svg width="12" height="10" viewBox="0 0 12 10"><path d="M0 5h5M5 0v10M5.500 3.500h5M5.500 6.500h5M11 1v8" fill="none" stroke="#e4f0fb" stroke-width="2"/></svg></button>
    <svg class="signal" width="11" height="12" viewBox="0 0 11 12"><path d="M0 9h2v3H0zM3 6h2v6H3zM6 3h2v9H6zM9 0h2v12H9z" fill="#e4f0fb"/></svg>
    <span class="host">SCEdesktop2</span>
    <button class="plain" aria-label="Свернуть"><svg width="9" height="9" viewBox="0 0 9 9"><path d="M1 8h7" stroke="#fff" stroke-width="2"/></svg></button>
    <button class="plain" aria-label="Восстановить"><svg width="9" height="10" viewBox="0 0 9 10"><path d="M3 3V1h5.500v4.500H6.500M.5 4.500h5v4h-5z" fill="none" stroke="#fff"/><path d="M3 1h6M0 4.500h6" stroke="#fff" stroke-width="2"/></svg></button>
    <button class="plain" aria-label="Закрыть"><svg width="8" height="8" viewBox="0 0 8 8"><path d="M0 0l8 8M8 0L0 8" stroke="#fff" stroke-width="2"/></svg></button>
  </div></header>
</main>
</body>
</html>
```
FILE: styles.css
```css
* { box-sizing: border-box; }
body { margin: 0; font: 12px/16px "Noto Sans", "Open Sans", sans-serif; color: #111; }
button, input, select { font: inherit; color: inherit; margin: 0; }
button { border: 0; padding: 0; background: none; display: flex; align-items: center; justify-content: center; white-space: nowrap; }
a { color: inherit; text-decoration: none; }
h1, h2, p { margin: 0; font: inherit; }
svg { display: block; flex: none; }
i.bar { flex: none; width: 1px; background: #c8c8c8; }
.defs { position: absolute; width: 0; height: 0; }
.grow { flex: 1; }
.i16 { width: 16px; height: 16px; }
.i14 { width: 14px; height: 14px; }
.i10 { width: 10px; height: 10px; }
.i8 { width: 8px; height: 8px; }
.tri { width: 5px; height: 3px; color: #666; }
.flip { transform: rotate(180deg); }
.turn { transform: rotate(90deg); }

.desktop {
  position: relative; min-height: 100vh; overflow: hidden; border-left: 3px solid #0038b8;
  background:
    radial-gradient(ellipse 60% 80% at 100% 50%, rgba(0, 56, 176, .3), transparent),
    linear-gradient(to bottom, rgba(0, 70, 180, .18), transparent 45%),
    linear-gradient(to right, #00adfd 0, #00b2fe 16%, #00a6f4 34%, #0078e2 52%, #0054cc 72%, #0040b8 100%);
}

/* desktop icons */
.shortcuts { display: grid; grid-template-columns: 74px 76px; grid-auto-rows: 99px; width: 150px; padding-top: 8px; }
.icon { display: flex; flex-direction: column; align-items: center; gap: 2px; color: #fff; text-align: center; line-height: 15px; text-shadow: 1px 1px 2px #000, 0 1px 2px #000; }
.icon.first { grid-column: 1; }
.icon span { max-width: 74px; }
.art { width: 48px; height: 48px; }

/* connection bar */
.rdp { position: absolute; top: 0; left: 394px; right: 392px; background: #7c8fa8; clip-path: polygon(0 0, 100% 0, calc(100% - 23px) 100%, 23px 100%); padding: 0 1px 1px; }
.rdp-in { display: flex; align-items: center; gap: 15px; height: 25px; padding: 0 36px 0 30px; background: linear-gradient(#659fd9, #2468ae 12px, #04458f 12px, #054291); clip-path: polygon(0 0, 100% 0, calc(100% - 23px) 100%, 23px 100%); }
.pinbtn { width: 20px; height: 21px; border: 1px solid #1464b4; background: #0c58a8; align-self: flex-start; }
.signal { margin-left: -8px; }
.host { flex: 1; text-align: center; padding-left: 26px; font-size: 11px; color: #d2e4f6; }

/* explorer */
.explorer { position: absolute; left: 292px; top: 49px; right: 183px; bottom: 85px; display: flex; flex-direction: column; background: #fff; box-shadow: 0 0 0 1px #3d6f9d, 0 3px 12px rgba(0, 0, 0, .4); }
.ex-title { display: flex; align-items: center; height: 30px; padding-left: 9px; gap: 7px; }
.ex-title .bar { height: 12px; background: #999; }
.ex-title h1 { color: #999; flex: 1; font-size: 11px; }
.wbtns { display: flex; align-self: stretch; }
.wbtns button { width: 46px; color: #888; }
.ex-tabs { display: flex; align-items: stretch; height: 24px; border-bottom: 1px solid #dadbdc; color: #3b2a35; font-size: 11px; }
.ex-tabs > button { padding: 0 14px; }
.ex-tabs .file { width: 56px; padding: 0; background: #0063b1; color: #fff; }
.ex-tabs .fold { padding: 0 9px; color: #999; }
.ex-tabs .help { align-self: center; width: 16px; height: 16px; margin-right: 3px; padding: 0; border-radius: 8px; background: #0067c0; color: #fff; font-weight: bold; }
.ex-nav { display: flex; align-items: center; height: 42px; padding: 0 12px 2px 0; gap: 12px; }
.arrows { display: flex; flex: none; align-items: center; gap: 12px; padding-left: 12px; width: 94px; color: #777; }
.arrows .dim { color: #ddd; margin-left: 4px; }
.address { flex: 410 1 0; display: flex; align-items: center; gap: 8px; height: 30px; border: 1px solid #d9d9d9; padding-left: 3px; color: #666; font-size: 11px; }
.address a { color: #000; }
.address .refresh { border-left: 1px solid #d9d9d9; width: 30px; align-self: stretch; margin-left: 2px; }
.search { flex: 326 1 0; display: flex; align-items: center; height: 30px; border: 1px solid #d9d9d9; padding-left: 14px; gap: 12px; }
.search input, .tell input { border: 0; padding: 0; background: none; outline: 0; min-width: 0; }
.search input { font-size: 12px; }
.search input::placeholder { color: #6b6b6b; opacity: 1; }
.ex-body { flex: 1; display: flex; min-height: 0; }
.tree { width: 140px; display: flex; flex-direction: column; flex: none; overflow: hidden; }
.tree a { display: flex; align-items: center; height: 24px; flex: none; padding-left: 32px; gap: 5px; white-space: nowrap; color: #000; }
.tree a span { overflow: hidden; flex: 1; }
.tree .pinned { padding-right: 4px; gap: 5px; }
.tree .pinned span { margin-right: -3px; }
.tree .root { padding-left: 24px; height: 32px; padding-top: 8px; }
.tree .current { background: #d9d9d9; }
.scroll { width: 16px; display: flex; flex-direction: column; align-items: center; padding: 4px 0; background: #f0f0f0; color: #505050; }
.scroll i { width: 15px; height: 289px; margin: 23px 1px auto 0; background: #cdcdcd; }
.files { flex: 1; position: relative; margin-left: 2px; padding-left: 15px; border-left: 1px solid #f0f0f0; font-size: 11px; }
.sort { position: absolute; left: 138px; top: -2px; color: #777; }
.files table { width: 601px; table-layout: fixed; border-collapse: separate; border-spacing: 0; }
.c1 { width: 258px; } .c2 { width: 144px; } .c3 { width: 120px; } .c4 { width: 80px; }
.files th { height: 25px; padding: 0 0 0 6px; border-right: 1px solid #e2e2e2; font-weight: normal; text-align: left; color: #4c607a; }
.files td { height: 28px; padding: 0 0 0 6px; border-top: 6px solid #fff; background: #d9d9d9; background-clip: padding-box; color: #6d6d6d; white-space: nowrap; }
.files th:first-child, .files td:first-child { padding-left: 3px; }
.files td:last-child { border-right: 3px solid #fff; padding-right: 4px; text-align: right; }
.fname { display: flex; gap: 5px; color: #000; }
.ex-status { height: 24px; display: flex; align-items: center; padding: 2px 0 0 14px; color: #2b3c60; }
.ex-status span + span { margin-left: 8px; padding-left: 9px; border-left: 1px solid #e4e4e4; }

/* word */
.word { position: absolute; left: 480px; top: 218px; right: 83px; bottom: 33px; display: flex; flex-direction: column; background: #e6e6e6; border: 1px solid #2b579a; box-shadow: 0 2px 10px rgba(0, 0, 0, .45); font-size: 11px; }
.w-head { position: relative; background: #2b579a; color: #fff; }
.clouds { position: absolute; inset: 0; width: 100%; height: 100%; }
.w-title { position: relative; display: flex; height: 35px; font-size: 12px; }
.w-title .wbtns button { height: 31px; color: #fff; }
.qat { flex: 1 1 0; display: flex; align-items: center; height: 31px; padding-left: 22px; gap: 10px; }
.undo { gap: 6px; margin-left: 4px; }
.undo .tri, .qat .tri { color: #fff; }
.ruler-opt { display: flex; align-items: center; gap: 6px; color: #3b4560; padding-right: 6px; font-size: 11px; }
.ruler-opt input { width: 13px; height: 13px; margin: 0; appearance: none; background: #f4f4f4; border: 1px solid #bbb; display: grid; place-items: center; }
.ruler-opt input::after { content: ""; width: 8px; height: 4px; border: solid #444; border-width: 0 0 2px 2px; transform: rotate(-45deg) translate(1px, -1px); }
.w-title h2 { line-height: 37px; margin-right: 24px; }
.w-title .wbtns { flex: 1 1 0; justify-content: flex-end; }
.w-tabs { position: relative; display: flex; height: 24px; }
.w-tabs > button { flex: none; padding: 0 9px 0 10px; }
.w-tabs .wfile { width: 62px; padding: 0 4px 0 0; font-size: 12px; }
.w-tabs .on { background: #f0f0f0; color: #2b579a; width: 61px; padding: 0; }
.tell { display: flex; align-items: center; gap: 6px; padding-left: 9px; font-size: 12px; }
.tell input { width: 47px; height: 16px; background: #3a66aa; }
.tell input::placeholder { color: #b4c6e0; opacity: 1; }
.w-tabs .share { background: #124078; width: 115px; margin-right: 16px; padding: 0; gap: 5px; }

.ribbon { display: flex; height: 93px; flex: none; background: #f0f0f0; border-bottom: 1px solid #d2d2d2; color: #444; }
.ribbon .plain { min-height: 16px; }
.group { display: flex; flex-direction: column; justify-content: space-between; margin: 4px 0 0; border-right: 1px solid #d4d4d4; }
.g-main { display: flex; justify-content: center; flex: 1; }
.big { flex-direction: column; justify-content: flex-start; padding-top: 4px; gap: 1px; }
.big > .tri { margin-top: 4px; }
.g-label { display: flex; align-items: center; color: #666; }
.g-label span { flex: 1; text-align: center; white-space: nowrap; }
.g-label button { width: 16px; }
.g-clip { width: 100px; }
.stack { display: flex; flex-direction: column; gap: 7px; padding: 2px 0 0 6px; }
.g-font { width: 196px; }
.rows { display: flex; flex-direction: column; padding-left: 4px; }
.row { display: flex; align-items: center; height: 22px; }
.combos { gap: 1px; }
.row > .bar { height: 20px; }
select { appearance: none; height: 22px; border: 1px solid #c6c6c6; border-radius: 0; padding: 0 11px 0 2px; background: #fff linear-gradient(45deg, transparent 50%, #666 50%) right 6px center / 3px 3px no-repeat; background-image: linear-gradient(45deg, transparent 50%, #666 50%), linear-gradient(135deg, #666 50%, transparent 50%); background-position: right 7px center, right 4px center; color: #444; }
.fontname { width: 132px; font-size: 12px; }
.fontsize { width: 55px; font-size: 12px; }
.r-fmt { gap: 8px; padding-left: 4px; }
.r-fmt .t { font-size: 13px; min-width: 13px; }
.r-fmt .wide { min-width: 15px; }
.r-fmt .small { font-size: 11px; }
.r-fmt sub, .r-fmt sup { font-size: 8px; line-height: 8px; color: #2e74b5; }
.r-fmt b { font-weight: 700; }
.r-col { gap: 8px; padding-left: 2px; }
.pair { gap: 7px; }
.mark { gap: 5px; }
.mark span { display: flex; align-items: center; font-size: 12px; }
.mark .hl { width: 16px; height: 16px; border-bottom: 4px solid #ff0; line-height: 10px; }
.mark .hl em { font-style: normal; font-weight: bold; font-size: 9px; }
.mark .hl svg { margin-left: -3px; }
.mark .fc { width: 16px; height: 16px; border-bottom: 4px solid #f00; justify-content: center; font-size: 13px; }
.r-col > .bar { margin-left: 9px; }
.grow-a { justify-content: flex-start; font-size: 13px; width: 16px; }
.grow-a.less { font-size: 12px; }
.grow-a .tri { align-self: flex-start; }
.g-para { width: 163px; }
.r-list { gap: 7px; padding-left: 4px; }
.sq { width: 22px; height: 22px; }
.sq.sel { background: #c5c5c5; }
.r-align .bar { margin: 0 9px 0 3px; }
.r-fill { gap: 8px; padding-left: 3px; }
.sortb { gap: 2px; }
.sortb span { display: flex; flex-direction: column; }
.sortb b { font-size: 9px; line-height: 9px; }
.sa { color: #2e74b5; } .sz { color: #7a3aa8; }
.pilcrow { font-size: 16px; width: 14px; color: #555; }
.g-style { width: 55px; }
.g-edit { width: 97px; }
.box { width: 30px; height: 30px; margin: -4px 0 4px; border: 1px solid #c6c6c6; background: #fafafa; display: grid; place-items: center; }
.collapse { align-self: flex-end; margin: 0 9px 0 0; }

.work { flex: 1; display: grid; grid-template: 24px 1fr / 24px 1fr; padding: 0 16px 17px 0; min-height: 0; }
.corner { padding: 4px 0 0 3px; }
.tabstop { width: 15px; height: 15px; background: #fff; border: 1px solid #f4f4f4; }
.hruler { position: relative; display: flex; height: 11px; margin: 5px 0 0 -1px; background: linear-gradient(to left, #c6c6c6 46px, #fff 46px); font-size: 10px; line-height: 11px; color: #333; }
.hruler b, .vruler b { font-weight: 500; }
.margin { display: flex; align-items: center; justify-content: space-around; flex: none; width: 23px; background: #c6c6c6; }
.cells { flex: 1; display: flex; overflow: hidden; }
.half { flex: 3 1 0; display: grid; place-items: center; }
.cell { flex: 8 1 0; display: grid; grid-template-columns: repeat(4, minmax(0, 1fr)); place-items: center; }
.cell b { white-space: nowrap; }
.tick { width: 1px; height: 6px; background: #333; }
.dot { width: 2px; height: 2px; background: #555; }
.indent { position: absolute; left: 18px; top: -3px; }
.rindent { position: absolute; right: 39px; top: 4px; }
.vruler { width: 11px; margin-left: 5px; background: #fff; display: flex; flex-direction: column; overflow: hidden; font-size: 10px; line-height: 11px; color: #333; }
.vcell { flex: 4 1 0; min-height: 0; display: grid; grid-template-rows: repeat(4, minmax(0, 1fr)); place-items: center; }
.vcell:first-child { flex-grow: 2; grid-template-rows: 1fr 1fr; }
.vend { flex: 1 1 0; display: grid; place-items: center; }
.vruler b { writing-mode: vertical-rl; transform: rotate(180deg); }
.vruler .tick { width: 6px; height: 1px; }
.page { background: #fff; padding: 39px 24px; font: 15px/18px "Liberation Sans", Arial, sans-serif; color: #4a0a50; }
.caret { display: block; width: 1px; height: 19px; margin-top: 10px; background: #000; }

.w-status { display: flex; align-items: center; height: 22px; flex: none; padding: 0 0 2px 8px; gap: 19px; background: #f1f1f1; border-top: 1px solid #bcbcbc; color: #555; }
.w-status .view { width: 38px; height: 21px; margin: 0 -19px -2px 0; }
.view.sel { background: #c9c9c9; }
.zoom { display: flex; align-items: center; gap: 3px; margin-left: 4px; }
.zoom input { appearance: none; width: 102px; height: 12px; margin: 0; background: linear-gradient(#999, #999) center / 100% 1px no-repeat; }
.zoom input::-webkit-slider-thumb { appearance: none; width: 4px; height: 12px; background: #555; }
.pct { margin: 0 17px 0 -3px; }
```
